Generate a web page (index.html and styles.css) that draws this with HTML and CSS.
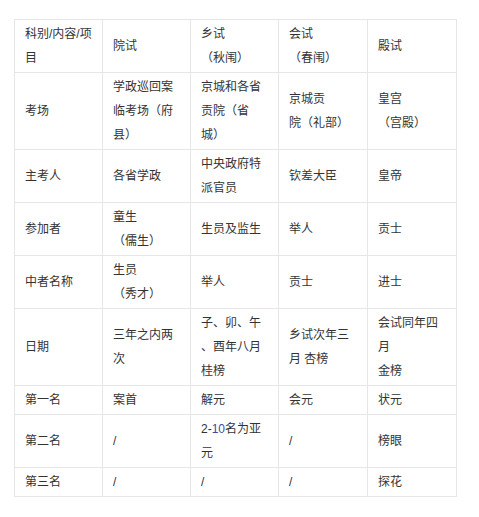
FILE: index.html
```html
<!DOCTYPE html>
<html lang="zh-CN">
<head>
<meta charset="utf-8">
<title>科举</title>
<link rel="stylesheet" href="styles.css">
</head>
<body>
<table class="exam-table">
  <colgroup>
    <col class="c1"><col class="c2"><col class="c3"><col class="c4"><col class="c5">
  </colgroup>
  <tr>
    <td>科别/内容/项目</td>
    <td>院试</td>
    <td>乡试<br>（秋闱）</td>
    <td>会试<br>（春闱）</td>
    <td>殿试</td>
  </tr>
  <tr>
    <td>考场</td>
    <td>学政巡回案临考场（府县）</td>
    <td>京城和各省贡院（省城）</td>
    <td>京城贡<br>院（礼部）</td>
    <td>皇宫<br>（宫殿）</td>
  </tr>
  <tr>
    <td>主考人</td>
    <td>各省学政</td>
    <td>中央政府特派官员</td>
    <td>钦差大臣</td>
    <td>皇帝</td>
  </tr>
  <tr>
    <td>参加者</td>
    <td>童生<br>（儒生）</td>
    <td>生员及监生</td>
    <td>举人</td>
    <td>贡士</td>
  </tr>
  <tr>
    <td>中者名称</td>
    <td>生员<br>（秀才）</td>
    <td>举人</td>
    <td>贡士</td>
    <td>进士</td>
  </tr>
  <tr>
    <td>日期</td>
    <td>三年之内两次</td>
    <td>子、卯、午<br>、酉年八月<br>桂榜</td>
    <td>乡试次年三月 杏榜</td>
    <td>会试同年四月<br>金榜</td>
  </tr>
  <tr>
    <td>第一名</td>
    <td>案首</td>
    <td>解元</td>
    <td>会元</td>
    <td>状元</td>
  </tr>
  <tr>
    <td>第二名</td>
    <td>/</td>
    <td>2-<span class="link">10</span>名为亚元</td>
    <td>/</td>
    <td>榜眼</td>
  </tr>
  <tr>
    <td>第三名</td>
    <td>/</td>
    <td>/</td>
    <td>/</td>
    <td>探花</td>
  </tr>
</table>
</body>
</html>
```
FILE: styles.css
```css
html, body {
  margin: 0;
  padding: 0;
  background: #ffffff;
}

body {
  font-family: "Liberation Sans", "Noto Sans CJK SC", sans-serif;
  font-size: 12px;
  color: #333333;
}

.exam-table {
  margin: 19px 0 0 14px;
  border-collapse: collapse;
  table-layout: fixed;
  width: 443px;
}

.c1, .c2, .c3 { width: 88px; }
.c4, .c5 { width: 89px; }

.exam-table td {
  border: 1px solid #e6e6e6;
  padding: 2px 10px;
  line-height: 24px;
  vertical-align: middle;
  text-align: left;
  word-break: normal;
  text-spacing-trim: space-all;
}

.link {
  color: #3f4aa0;
}
```
